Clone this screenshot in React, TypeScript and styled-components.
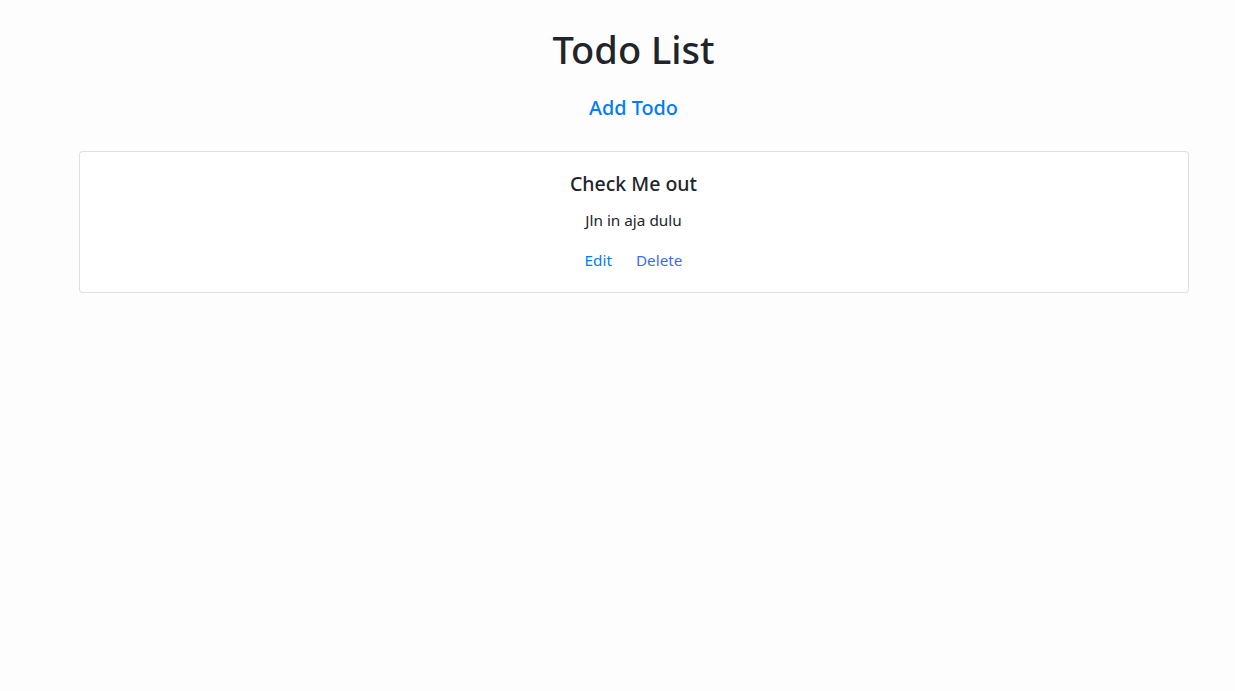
import React from "react";
import styled, { createGlobalStyle } from "styled-components";

const Global = createGlobalStyle`
  html, body { margin: 0; padding: 0; background: #fdfdfd; }
  body {
    font-family: "Noto Sans", "Open Sans", "Liberation Sans", sans-serif;
    color: #212529;
    font-size: 16px;
    line-height: 1.5;
  }
`;

const Page = styled.div`
  padding-left: 32px;
  min-height: 691px;
  box-sizing: border-box;
`;

const Container = styled.div`
  max-width: 1110px;
  margin: 0 auto;
  display: flex;
  flex-direction: column;
  align-items: center;
`;

const Title = styled.h1`
  margin: 25px 0 20px;
  font-size: 38px;
  font-weight: 500;
  line-height: 48px;
  color: #212529;
`;

const AddLink = styled.a`
  font-size: 19.8px;
  font-weight: 500;
  line-height: 30px;
  color: #007bff;
  text-decoration: none;
  margin-bottom: 28px;
  cursor: pointer;
`;

const Card = styled.div`
  align-self: stretch;
  border: 1px solid rgba(0, 0, 0, 0.125);
  border-radius: 4px;
  padding: 20px;
  display: flex;
  flex-direction: column;
  align-items: center;
  background: #fff;
`;

const CardTitle = styled.h5`
  margin: 0 0 12px;
  font-size: 19.5px;
  font-weight: 500;
  line-height: 24px;
`;

const CardText = styled.p`
  margin: 0 0 16px;
  font-size: 15.3px;
  line-height: 24px;
`;

const Links = styled.div`
  display: flex;
  gap: 24px;
  font-size: 15.3px;
  line-height: 24px;
`;

const CardLink = styled.a<{ $tone?: string }>`
  color: ${(p) => p.$tone ?? "#007bff"};
  text-decoration: none;
  cursor: pointer;
`;

export default function App() {
  return (
    <>
      <Global />
      <Page>
        <Container>
          <Title>Todo List</Title>
          <AddLink>Add Todo</AddLink>
          <Card>
            <CardTitle>Check Me out</CardTitle>
            <CardText>Jln in aja dulu</CardText>
            <Links>
              <CardLink>Edit</CardLink>
              <CardLink $tone="#3f6af7">Delete</CardLink>
            </Links>
          </Card>
        </Container>
      </Page>
    </>
  );
}
